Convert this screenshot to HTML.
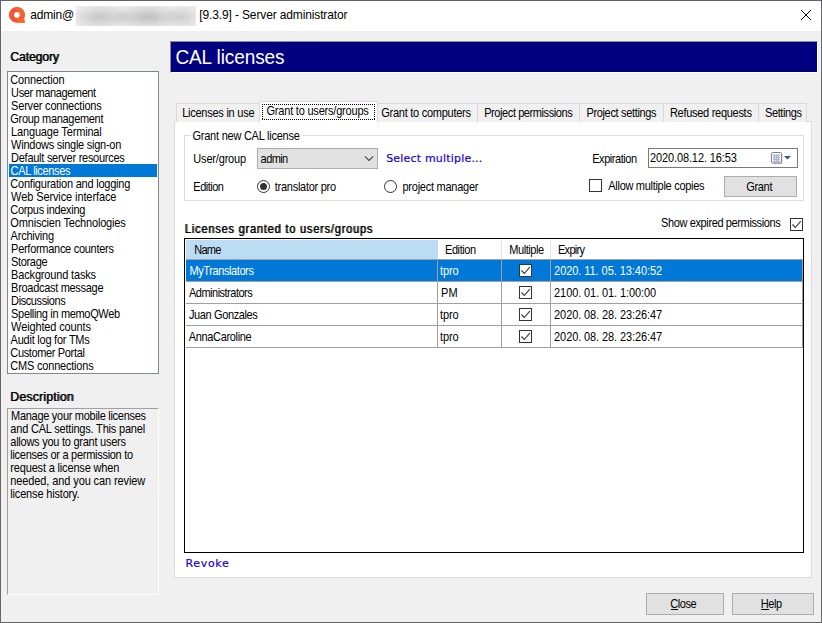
<!DOCTYPE html>
<html lang="en">
<head>
<meta charset="utf-8">
<title>Server administrator</title>
<style>
*{box-sizing:border-box;margin:0;padding:0}
html,body{width:822px;height:623px;overflow:hidden;background:#f0f0f0}
body{position:relative;font-family:"Liberation Sans",sans-serif;font-size:11px;color:#000}
#win{position:absolute;left:0;top:0;width:822px;height:623px;background:#f0f0f0;overflow:hidden}
#win div,#win svg,#win span.x{position:absolute}
/* text */
.x{white-space:pre;display:block;z-index:5}
.n,.w{transform:scaleY(1.1)}
.b11{transform:scaleY(1.08)}
.b13{transform:scale(0.94,1.03)}
.big{transform:scaleY(1.04)}
.t{transform:scaleY(1.03)}
.n{font:normal 11px/15px "Liberation Sans",sans-serif;color:#000}
.w{font:normal 11px/15px "Liberation Sans",sans-serif;color:#fff}
.b11{font:normal 11px/15px "Liberation Sans",sans-serif;color:#000;text-shadow:0.9px 0 0 rgba(0,0,0,.8)}
.b13{font:normal 13px/17px "Liberation Sans",sans-serif;color:#000;text-shadow:0.9px 0 0 rgba(0,0,0,.85)}
.t{font:normal 12px/16px "Liberation Sans",sans-serif;color:#000}
.big{font:normal 19px/23px "Liberation Sans",sans-serif;color:#fff}
.lnk{font:normal 11px/15px "DejaVu Sans","Liberation Sans",sans-serif;color:#1e00d0;-webkit-text-stroke:0.2px #1e00d0}
.ul{height:1px;top:609px;background:#000;z-index:6}
/* chrome */
#titlebar{left:1px;top:1px;width:820px;height:30px;background:#fff}
#blur{left:76px;top:6px;width:120px;height:20px;background:
 radial-gradient(ellipse 30px 13px at 24px 11px,rgba(160,160,160,.5),rgba(200,200,200,0) 100%),
 radial-gradient(ellipse 34px 13px at 72px 11px,rgba(155,155,155,.55),rgba(200,200,200,0) 100%),
 radial-gradient(ellipse 20px 12px at 106px 11px,rgba(170,170,170,.45),rgba(200,200,200,0) 100%),
 radial-gradient(ellipse 16px 11px at 47px 11px,rgba(190,190,190,.3),rgba(200,200,200,0) 100%),
 #ececec}
.bt{left:0;top:0;width:822px;height:1px;background:#636363}
.bl{left:0;top:0;width:1px;height:623px;background:#666}
.br{left:821px;top:0;width:1px;height:623px;background:linear-gradient(180deg,#56626c 0,#5c6872 8px,#6a6a6a 9px,#6a6a6a 100%)}
.bb{left:0;top:622px;width:822px;height:1px;background:#636363}
#catlist{left:7px;top:71px;width:152px;height:303px;background:#fff;border:1px solid #828790}
#catsel{left:9px;top:164px;width:148px;height:13px;background:#0078d7}
#desc{left:7px;top:408px;width:152px;height:187px;border:1px solid;border-color:#a0a0a0 #fff #fff #a0a0a0;background:#f0f0f0}
#banner{left:170px;top:41px;width:648px;height:32px;background:#000080;border:1px solid;border-color:#8e8e86 #fff #fff #8e8e86}
.tab{top:103px;height:19px;border:1px solid #d9d9d9;border-bottom:none;background:#f0f0f0}
.tab.on{top:101px;height:21px;background:#fff;z-index:3}
#page{left:174px;top:121px;width:638px;height:457px;background:#fff;border:1px solid #dcdcdc}
#focus{left:262px;top:104px;width:113px;height:16px;z-index:4;background:
 repeating-linear-gradient(90deg,#000 0 1px,transparent 1px 2px) 0 0/100% 1px no-repeat,
 repeating-linear-gradient(90deg,#000 0 1px,transparent 1px 2px) 0 100%/100% 1px no-repeat,
 repeating-linear-gradient(180deg,#000 0 1px,transparent 1px 2px) 0 0/1px 100% no-repeat,
 repeating-linear-gradient(180deg,#000 0 1px,transparent 1px 2px) 100% 0/1px 100% no-repeat}
#grp{left:184px;top:135px;width:620px;height:66px;border:1px solid #dcdcdc;background:#fff}
#grpcap{left:191px;top:130px;width:111px;height:12px;background:#fff}
#combo{left:257px;top:148px;width:121px;height:21px;border:1px solid #adadad;background:#e1e1e1}
#date{left:648px;top:148px;width:150px;height:20px;border:1px solid #7a7a7a;background:#fff}
.btn{border:1px solid #adadad;background:#e1e1e1}
.chk{width:13px;height:13px;border:1px solid #333;background:#fff}
.radio{width:13px;height:13px;border:1px solid #333;border-radius:50%;background:#fff}
.radio.on::after{content:"";position:absolute;left:2px;top:2px;width:7px;height:7px;border-radius:50%;background:#333}
#grid{left:184px;top:238px;width:620px;height:315px;border:1px solid #000;background:#fff}
#hsel{left:186px;top:240px;width:252px;height:19px;background:#bcdcf4}
#rowsel{left:186px;top:260px;width:617px;height:21px;background:#0078d7}
.hl{height:1px;background:#a0a0a0;left:186px;width:617px}
.vl{width:1px;background:#a0a0a0;top:259px;height:89px}
.vh{width:1px;background:#e5e5e5;top:240px;height:19px}
</style>
</head>
<body>
<div id="win">
  <div id="titlebar"></div>
  <svg style="left:9px;top:7px" width="16" height="16" viewBox="0 0 16 16">
    <path d="M7.9 0A7.9 7.9 0 1 0 7.9 15.8L15.9 15.8L15 11.4A7.9 7.9 0 0 0 7.9 0z" fill="#f4523a"/>
    <path d="M5.6 0.4A7.9 7.9 0 0 1 15.8 7.9A7.9 7.9 0 0 1 15 11.4L13.6 10.6C11.4 9 9.6 5 5.6 0.4z" fill="#f4672c"/>
    <path d="M7 11.4C8.4 13.6 10 14.6 11.4 15.8L15.9 15.8L15 11.4C12.6 10.4 9.6 10.4 7 11.4z" fill="#f56a28"/>
    <path d="M1 4.2A7.9 7.9 0 0 0 1.2 12C2 9.6 3.4 8 5.2 6.6z" fill="#f35a31"/>
    <circle cx="7.9" cy="7.9" r="2.8" fill="#fff"/>
  </svg>
  <div id="blur"></div>
  <svg style="left:800px;top:9px" width="12" height="12" viewBox="0 0 12 12"><path d="M1 1L11 11M11 1L1 11" stroke="#000" stroke-width="1" fill="none"/></svg>

  <div id="catlist"></div>
  <div id="catsel"></div>
  <div id="desc"></div>
  <div id="banner"></div>

  <div id="page"></div>
  <div class="tab" style="left:176px;width:85px"></div>
  <div class="tab" style="left:377px;width:101px"></div>
  <div class="tab" style="left:477px;width:103px"></div>
  <div class="tab" style="left:579px;width:85px"></div>
  <div class="tab" style="left:663px;width:96px"></div>
  <div class="tab" style="left:758px;width:49px"></div>
  <div class="tab on" style="left:259px;width:119px"></div>
  <div id="focus"></div>

  <div id="grp"></div>
  <div id="grpcap"></div>
  <div id="combo"></div>
  <svg style="left:364px;top:155px" width="10" height="7" viewBox="0 0 10 7"><path d="M0.8 1.3L5 5.5L9.2 1.3" stroke="#444" stroke-width="1.1" fill="none"/></svg>
  <div id="date"></div>
  <svg style="left:770px;top:151px" width="24" height="14" viewBox="0 0 24 14">
    <rect x="2.5" y="2.5" width="10" height="10.5" rx="1" fill="#c9c0bc"/>
    <rect x="1.5" y="1.5" width="10" height="10.5" rx="1" fill="#f4f6fa" stroke="#8a8380" stroke-width="1"/>
    <path d="M3 4.5h7M3 6.5h7M3 8.5h7M3 10.5h7M4.5 3.5v7.5M6.5 3.5v7.5M8.5 3.5v7.5" stroke="#aab4cc" stroke-width="1" fill="none"/>
    <path d="M14 5h7l-3.5 3.6z" fill="#3f5583"/>
  </svg>
  <div class="radio on" style="left:257px;top:180px"></div>
  <div class="radio" style="left:384px;top:180px"></div>
  <div class="chk" style="left:589px;top:179px"></div>
  <div class="btn" style="left:724px;top:176px;width:73px;height:21px"></div>

  <div class="chk" style="left:790px;top:218px"></div>
  <svg style="left:790px;top:218px" width="13" height="13" viewBox="0 0 13 13"><path d="M2.5 6.5L5.3 9.5L10.8 3.2" stroke="#333" stroke-width="1.1" fill="none"/></svg>

  <div id="grid"></div>
  <div id="hsel"></div>
  <div class="vh" style="left:501px"></div>
  <div class="vh" style="left:550px"></div>
  <div id="rowsel"></div>
  <div class="hl" style="top:259px"></div>
  <div class="hl" style="top:281px"></div>
  <div class="hl" style="top:303px"></div>
  <div class="hl" style="top:325px"></div>
  <div class="hl" style="top:347px"></div>
  <div class="vl" style="left:437px"></div>
  <div class="vl" style="left:501px"></div>
  <div class="vl" style="left:550px"></div>
  <div class="vl" style="left:802px"></div>
  <div class="chk" style="left:519px;top:264px"></div>
  <div class="chk" style="left:519px;top:286px"></div>
  <div class="chk" style="left:519px;top:308px"></div>
  <div class="chk" style="left:519px;top:330px"></div>
  <svg style="left:519px;top:264px" width="13" height="79" viewBox="0 0 13 79">
    <path d="M2.5 6.5L5.3 9.5L10.8 3.2M2.5 28.5L5.3 31.5L10.8 25.2M2.5 50.5L5.3 53.5L10.8 47.2M2.5 72.5L5.3 75.5L10.8 69.2" stroke="#333" stroke-width="1.1" fill="none"/>
  </svg>

  <div class="btn" style="left:646px;top:593px;width:78px;height:22px"></div>
  <div class="btn" style="left:732px;top:593px;width:82px;height:22px"></div>
  <div class="ul" style="left:671px;width:7px"></div>
  <div class="ul" style="left:761px;width:8px"></div>

<span class="x t" style="left:30.30px;top:7.30px;letter-spacing:-0.197px;transform-origin:0 12.00px">admin@</span>
<span class="x t" style="left:199.30px;top:7.30px;letter-spacing:-0.133px;transform-origin:0 12.00px">[9.3.9] - Server administrator</span>
<span class="x b13" style="left:9.60px;top:48.00px;letter-spacing:-0.130px;transform-origin:0 13.00px">Category</span>
<span class="x b13" style="left:10.10px;top:388.00px;letter-spacing:0.237px;transform-origin:0 13.00px">Description</span>
<span class="x n" style="left:10.30px;top:72.50px;letter-spacing:-0.148px;transform-origin:0 11.50px">Connection</span>
<span class="x n" style="left:11.10px;top:85.50px;letter-spacing:-0.388px;transform-origin:0 11.50px">User management</span>
<span class="x n" style="left:11.10px;top:98.50px;letter-spacing:-0.209px;transform-origin:0 11.50px">Server connections</span>
<span class="x n" style="left:10.30px;top:111.50px;letter-spacing:-0.312px;transform-origin:0 11.50px">Group management</span>
<span class="x n" style="left:11.10px;top:124.50px;letter-spacing:-0.170px;transform-origin:0 11.50px">Language Terminal</span>
<span class="x n" style="left:11.10px;top:137.50px;letter-spacing:-0.254px;transform-origin:0 11.50px">Windows single sign-on</span>
<span class="x n" style="left:11.10px;top:150.50px;letter-spacing:-0.266px;transform-origin:0 11.50px">Default server resources</span>
<span class="x w" style="left:10.60px;top:163.50px;letter-spacing:-0.363px;transform-origin:0 11.50px">CAL licenses</span>
<span class="x n" style="left:10.30px;top:176.50px;letter-spacing:-0.223px;transform-origin:0 11.50px">Configuration and logging</span>
<span class="x n" style="left:11.10px;top:189.50px;letter-spacing:-0.104px;transform-origin:0 11.50px">Web Service interface</span>
<span class="x n" style="left:10.30px;top:202.50px;letter-spacing:-0.320px;transform-origin:0 11.50px">Corpus indexing</span>
<span class="x n" style="left:10.30px;top:215.50px;letter-spacing:-0.168px;transform-origin:0 11.50px">Omniscien Technologies</span>
<span class="x n" style="left:10.60px;top:228.50px;letter-spacing:-0.215px;transform-origin:0 11.50px">Archiving</span>
<span class="x n" style="left:11.10px;top:241.50px;letter-spacing:-0.285px;transform-origin:0 11.50px">Performance counters</span>
<span class="x n" style="left:11.10px;top:254.50px;letter-spacing:-0.352px;transform-origin:0 11.50px">Storage</span>
<span class="x n" style="left:11.10px;top:267.50px;letter-spacing:-0.162px;transform-origin:0 11.50px">Background tasks</span>
<span class="x n" style="left:11.10px;top:280.50px;letter-spacing:-0.300px;transform-origin:0 11.50px">Broadcast message</span>
<span class="x n" style="left:11.10px;top:293.50px;letter-spacing:-0.408px;transform-origin:0 11.50px">Discussions</span>
<span class="x n" style="left:11.10px;top:306.50px;letter-spacing:-0.333px;transform-origin:0 11.50px">Spelling in memoQWeb</span>
<span class="x n" style="left:11.10px;top:319.50px;letter-spacing:-0.131px;transform-origin:0 11.50px">Weighted counts</span>
<span class="x n" style="left:10.60px;top:332.50px;letter-spacing:-0.234px;transform-origin:0 11.50px">Audit log for TMs</span>
<span class="x n" style="left:10.30px;top:345.50px;letter-spacing:-0.352px;transform-origin:0 11.50px">Customer Portal</span>
<span class="x n" style="left:10.30px;top:358.50px;letter-spacing:-0.200px;transform-origin:0 11.50px">CMS connections</span>
<span class="x n" style="left:11.10px;top:408.50px;letter-spacing:-0.291px;transform-origin:0 11.50px">Manage your mobile licenses</span>
<span class="x n" style="left:10.30px;top:421.50px;letter-spacing:-0.192px;transform-origin:0 11.50px">and CAL settings. This panel</span>
<span class="x n" style="left:10.30px;top:434.50px;letter-spacing:-0.249px;transform-origin:0 11.50px">allows you to grant users</span>
<span class="x n" style="left:10.30px;top:447.50px;letter-spacing:-0.285px;transform-origin:0 11.50px">licenses or a permission to</span>
<span class="x n" style="left:10.30px;top:460.50px;letter-spacing:-0.166px;transform-origin:0 11.50px">request a license when</span>
<span class="x n" style="left:10.30px;top:473.50px;letter-spacing:-0.106px;transform-origin:0 11.50px">needed, and you can review</span>
<span class="x n" style="left:10.30px;top:486.50px;letter-spacing:-0.172px;transform-origin:0 11.50px">license history.</span>
<span class="x big" style="left:175.40px;top:46.00px;letter-spacing:-0.089px;transform-origin:0 18.00px">CAL licenses</span>
<span class="x n" style="left:182.20px;top:105.50px;letter-spacing:-0.250px;transform-origin:0 11.50px">Licenses in use</span>
<span class="x n" style="left:266.50px;top:103.50px;letter-spacing:-0.204px;transform-origin:0 11.50px">Grant to users/groups</span>
<span class="x n" style="left:381.30px;top:105.50px;letter-spacing:-0.262px;transform-origin:0 11.50px">Grant to computers</span>
<span class="x n" style="left:484.20px;top:105.50px;letter-spacing:-0.415px;transform-origin:0 11.50px">Project permissions</span>
<span class="x n" style="left:586.40px;top:105.50px;letter-spacing:-0.333px;transform-origin:0 11.50px">Project settings</span>
<span class="x n" style="left:669.90px;top:105.50px;letter-spacing:-0.281px;transform-origin:0 11.50px">Refused requests</span>
<span class="x n" style="left:765.00px;top:105.50px;letter-spacing:-0.392px;transform-origin:0 11.50px">Settings</span>
<span class="x n" style="left:192.50px;top:128.50px;letter-spacing:-0.239px;transform-origin:0 11.50px">Grant new CAL license</span>
<span class="x n" style="left:193.30px;top:151.50px;letter-spacing:-0.177px;transform-origin:0 11.50px">User/group</span>
<span class="x n" style="left:260.60px;top:151.50px;letter-spacing:-0.586px;transform-origin:0 11.50px">admin</span>
<span class="x lnk" style="left:386.20px;top:151.00px;letter-spacing:0.192px">Select multiple...</span>
<span class="x n" style="left:592.20px;top:151.50px;letter-spacing:-0.444px;transform-origin:0 11.50px">Expiration</span>
<span class="x n" style="left:649.90px;top:150.50px;letter-spacing:-0.105px;transform-origin:0 11.50px">2020.08.12. 16:53</span>
<span class="x n" style="left:193.30px;top:179.50px;letter-spacing:-0.503px;transform-origin:0 11.50px">Edition</span>
<span class="x n" style="left:274.80px;top:179.50px;letter-spacing:-0.268px;transform-origin:0 11.50px">translator pro</span>
<span class="x n" style="left:402.50px;top:179.50px;letter-spacing:-0.252px;transform-origin:0 11.50px">project manager</span>
<span class="x n" style="left:608.30px;top:178.50px;letter-spacing:-0.295px;transform-origin:0 11.50px">Allow multiple copies</span>
<span class="x n" style="left:746.20px;top:179.50px;letter-spacing:-0.314px;transform-origin:0 11.50px">Grant</span>
<span class="x b11" style="left:184.60px;top:221.50px;letter-spacing:0.802px;transform-origin:0 11.50px">Licenses granted to users/groups</span>
<span class="x n" style="left:661.00px;top:215.50px;letter-spacing:-0.374px;transform-origin:0 11.50px">Show expired permissions</span>
<span class="x n" style="left:194.30px;top:242.50px;letter-spacing:-0.742px;transform-origin:0 11.50px">Name</span>
<span class="x n" style="left:445.00px;top:242.50px;letter-spacing:-0.419px;transform-origin:0 11.50px">Edition</span>
<span class="x n" style="left:509.30px;top:242.50px;letter-spacing:-0.441px;transform-origin:0 11.50px">Multiple</span>
<span class="x n" style="left:558.00px;top:242.50px;letter-spacing:-0.712px;transform-origin:0 11.50px">Expiry</span>
<span class="x w" style="left:189.40px;top:263.50px;letter-spacing:-0.398px;transform-origin:0 11.50px">MyTranslators</span>
<span class="x w" style="left:440.00px;top:263.50px;letter-spacing:-0.112px;transform-origin:0 11.50px">tpro</span>
<span class="x w" style="left:554.10px;top:263.50px;letter-spacing:-0.060px;transform-origin:0 11.50px">2020. 11. 05. 13:40:52</span>
<span class="x n" style="left:189.00px;top:285.50px;letter-spacing:-0.507px;transform-origin:0 11.50px">Administrators</span>
<span class="x n" style="left:441.00px;top:285.50px;letter-spacing:0.163px;transform-origin:0 11.50px">PM</span>
<span class="x n" style="left:554.10px;top:285.50px;letter-spacing:-0.098px;transform-origin:0 11.50px">2100. 01. 01. 1:00:00</span>
<span class="x n" style="left:189.00px;top:307.50px;letter-spacing:-0.382px;transform-origin:0 11.50px">Juan Gonzales</span>
<span class="x n" style="left:440.00px;top:307.50px;letter-spacing:-0.112px;transform-origin:0 11.50px">tpro</span>
<span class="x n" style="left:554.10px;top:307.50px;letter-spacing:-0.099px;transform-origin:0 11.50px">2020. 08. 28. 23:26:47</span>
<span class="x n" style="left:188.80px;top:329.50px;letter-spacing:-0.349px;transform-origin:0 11.50px">AnnaCaroline</span>
<span class="x n" style="left:440.00px;top:329.50px;letter-spacing:-0.112px;transform-origin:0 11.50px">tpro</span>
<span class="x n" style="left:554.10px;top:329.50px;letter-spacing:-0.099px;transform-origin:0 11.50px">2020. 08. 28. 23:26:47</span>
<span class="x lnk" style="left:185.40px;top:556.00px;letter-spacing:0.693px">Revoke</span>
<span class="x n" style="left:670.30px;top:596.50px;letter-spacing:-0.451px;transform-origin:0 11.50px">Close</span>
<span class="x n" style="left:760.80px;top:596.50px;letter-spacing:-0.435px;transform-origin:0 11.50px">Help</span>

  <div class="bt"></div><div class="bl"></div><div class="br"></div><div class="bb"></div>
</div>
</body>
</html>
